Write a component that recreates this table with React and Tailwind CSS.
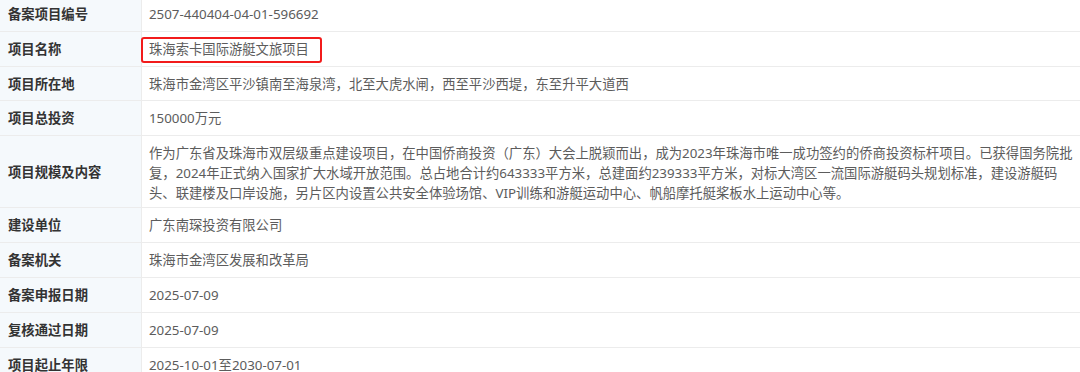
import React from "react";

const rows = [
  { label: "备案项目编号", value: "2507-440404-04-01-596692", h: "h-[35px]" },
  { label: "项目名称", value: "珠海索卡国际游艇文旅项目", h: "h-[35px]", marked: true },
  { label: "项目所在地", value: "珠海市金湾区平沙镇南至海泉湾，北至大虎水闸，西至平沙西堤，东至升平大道西", h: "h-[34px]" },
  { label: "项目总投资", value: "150000万元", h: "h-[35px]" },
  {
    label: "项目规模及内容",
    lines: [
      "作为广东省及珠海市双层级重点建设项目，在中国侨商投资（广东）大会上脱颖而出，成为2023年珠海市唯一成功签约的侨商投资标杆项目。已获得国务院批",
      "复，2024年正式纳入国家扩大水域开放范围。总占地合计约643333平方米，总建面约239333平方米，对标大湾区一流国际游艇码头规划标准，建设游艇码",
      "头、联建楼及口岸设施，另片区内设置公共安全体验场馆、VIP训练和游艇运动中心、帆船摩托艇桨板水上运动中心等。",
    ],
    h: "h-[72px]",
  },
  { label: "建设单位", value: "广东南琛投资有限公司", h: "h-[35px]" },
  { label: "备案机关", value: "珠海市金湾区发展和改革局", h: "h-[35px]" },
  { label: "备案申报日期", value: "2025-07-09", h: "h-[35px]" },
  { label: "复核通过日期", value: "2025-07-09", h: "h-[35px]" },
  { label: "项目起止年限", value: "2025-10-01至2030-07-01", h: "h-[35px]" },
];

export default function App() {
  return (
    <div
      className="w-[1080px] h-[372px] overflow-hidden bg-white text-[13.33px]"
      style={{ fontFamily: '"Noto Sans", "Noto Sans CJK SC", sans-serif' }}
    >
      <div className="-mt-[3px]">
        {rows.map((r) => (
          <div key={r.label} className={`flex border-b border-[#ececec] ${r.h}`}>
            <div className="w-[142px] shrink-0 flex items-center pl-2 pt-[2px] bg-[#f5f9fc] border-r border-[#ececec] font-bold text-[#333]">
              {r.label}
            </div>
            <div className="relative flex-1 flex items-center pl-[7px] pr-[13px] pt-[2px] text-[#5c5c5c]">
              {r.lines ? (
                <p className="leading-[20px] whitespace-nowrap">
                  {r.lines.map((l, i) => (
                    <React.Fragment key={i}>
                      {l}
                      {i < r.lines.length - 1 && <br />}
                    </React.Fragment>
                  ))}
                </p>
              ) : (
                <span>{r.value}</span>
              )}
              {r.marked && (
                <div className="absolute left-[-1px] top-[5px] w-[181px] h-[26px] border-2 border-[#f21b1b] rounded-[3px]" />
              )}
            </div>
          </div>
        ))}
      </div>
    </div>
  );
}
